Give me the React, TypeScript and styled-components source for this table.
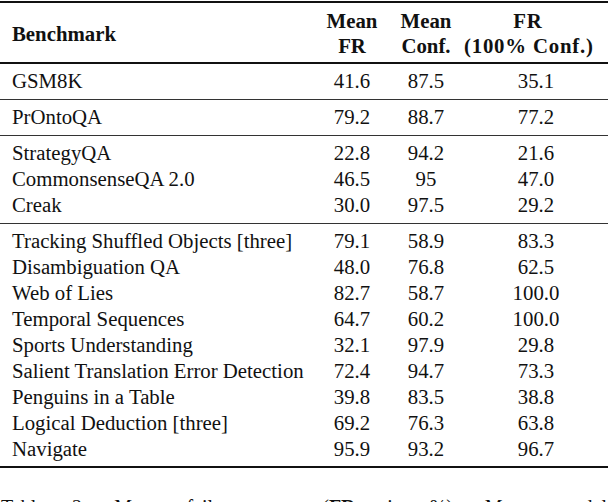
import styled, { createGlobalStyle } from "styled-components";

const serif = `"Liberation Serif", "Times New Roman", Times, serif`;

const GlobalStyle = createGlobalStyle`
  html, body {
    margin: 0;
    padding: 0;
    background: #ffffff;
    overflow: hidden;
  }
  body {
    font-family: ${serif};
    color: #111111;
  }
`;

const Page = styled.div`
  width: 608px;
  height: 502px;
  overflow: hidden;
  font-family: ${serif};
`;

const Table = styled.table`
  width: 608px;
  margin-top: 1px;
  border-collapse: collapse;
  table-layout: fixed;
  font-family: ${serif};
  font-size: 20.8px;
  color: #111111;
  border-top: 2px solid #111;
  border-bottom: 2px solid #111;
`;

const Head = styled.thead`
  border-bottom: 2px solid #111;
`;

const HeadCell = styled.th<{ $first?: boolean; $shift?: number; $wide?: boolean }>`
  font-family: ${serif};
  font-weight: bold;
  line-height: 25px;
  padding: 5px ${(p) => p.$shift ?? 0}px 4px ${(p) => (p.$first ? 12 : 0)}px;
  text-align: ${(p) => (p.$first ? "left" : "center")};
  letter-spacing: ${(p) => (p.$wide ? "0.8px" : "0")};
  vertical-align: middle;
  white-space: nowrap;
`;

const Group = styled.tbody<{ $last?: boolean }>`
  border-bottom: ${(p) => (p.$last ? "none" : "1px solid #333")};

  tr:first-child td {
    padding-top: 4px;
  }
  tr:last-child td {
    padding-bottom: ${(p) => (p.$last ? 4 : 5)}px;
  }
`;

const Cell = styled.td<{ $name?: boolean }>`
  font-family: ${serif};
  line-height: 26px;
  padding: 0 0 0 ${(p) => (p.$name ? 12 : 0)}px;
  text-align: ${(p) => (p.$name ? "left" : "center")};
  white-space: nowrap;
`;

const Caption = styled.div`
  width: 606px;
  font-family: ${serif};
  font-size: 20px;
  line-height: 26px;
  padding: 26px 0 0 1px;
  text-align: justify;
  text-align-last: justify;

  b {
    font-weight: bold;
  }
`;

type Row = [string, string, string, string];

const groups: Row[][] = [
  [["GSM8K", "41.6", "87.5", "35.1"]],
  [["PrOntoQA", "79.2", "88.7", "77.2"]],
  [
    ["StrategyQA", "22.8", "94.2", "21.6"],
    ["CommonsenseQA 2.0", "46.5", "95", "47.0"],
    ["Creak", "30.0", "97.5", "29.2"],
  ],
  [
    ["Tracking Shuffled Objects [three]", "79.1", "58.9", "83.3"],
    ["Disambiguation QA", "48.0", "76.8", "62.5"],
    ["Web of Lies", "82.7", "58.7", "100.0"],
    ["Temporal Sequences", "64.7", "60.2", "100.0"],
    ["Sports Understanding", "32.1", "97.9", "29.8"],
    ["Salient Translation Error Detection", "72.4", "94.7", "73.3"],
    ["Penguins in a Table", "39.8", "83.5", "38.8"],
    ["Logical Deduction [three]", "69.2", "76.3", "63.8"],
    ["Navigate", "95.9", "93.2", "96.7"],
  ],
];

export default function App() {
  return (
    <Page>
      <GlobalStyle />
      <Table>
        <colgroup>
          <col style={{ width: 316 }} />
          <col style={{ width: 72 }} />
          <col style={{ width: 76 }} />
          <col style={{ width: 144 }} />
        </colgroup>
        <Head>
          <tr>
            <HeadCell $first>Benchmark</HeadCell>
            <HeadCell>
              Mean
              <br />
              FR
            </HeadCell>
            <HeadCell>
              Mean
              <br />
              Conf.
            </HeadCell>
            <HeadCell $shift={16} $wide>
              FR
              <br />
              (100% Conf.)
            </HeadCell>
          </tr>
        </Head>
        {groups.map((rows, gi) => (
          <Group key={gi} $last={gi === groups.length - 1}>
            {rows.map((r) => (
              <tr key={r[0]}>
                <Cell $name>{r[0]}</Cell>
                <Cell>{r[1]}</Cell>
                <Cell>{r[2]}</Cell>
                <Cell>{r[3]}</Cell>
              </tr>
            ))}
          </Group>
        ))}
      </Table>
      <Caption>
        Table 2: Mean failure rate (<b>FR</b>, in %), Mean model
      </Caption>
    </Page>
  );
}
